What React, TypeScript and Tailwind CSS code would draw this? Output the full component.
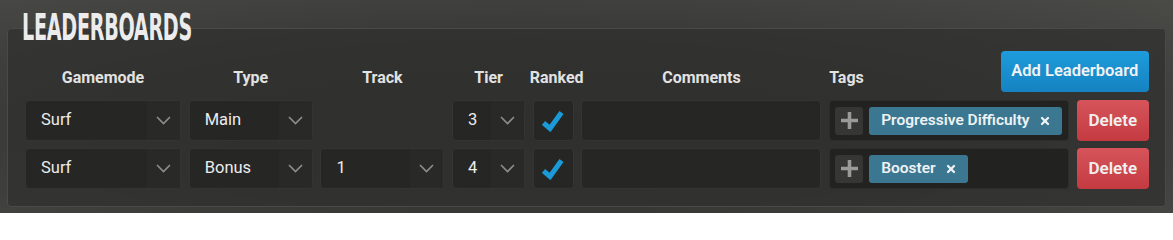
import React from 'react';
import { X } from 'lucide-react';

interface Row {
  gamemode: string;
  type: string;
  track: string | null;
  tier: string;
  ranked: boolean;
  tags: string[];
}

const ROWS: Row[] = [
  { gamemode: 'Surf', type: 'Main', track: null, tier: '3', ranked: true, tags: ['Progressive Difficulty'] },
  { gamemode: 'Surf', type: 'Bonus', track: '1', tier: '4', ranked: true, tags: ['Booster'] },
];

const GRID =
  'grid grid-cols-[156px_124px_124px_73px_41px_240px_240px_72px] gap-x-[7.7px]';

function Select({ value }: { value: string }) {
  return (
    <div className="h-[41px] flex rounded-[4px] border border-[#343432] bg-[#262624] overflow-hidden">
      <div className="flex-1 flex items-center pl-[15px] text-[16.5px] text-[#ececec]">{value}</div>
      <div className="w-[33px] flex items-center justify-center bg-[#292927]">
        <svg width="15" height="9" viewBox="0 0 15 9">
          <path d="M1 1 L7.5 7.5 L14 1" fill="none" stroke="#8e8e8e" strokeWidth="1.6" />
        </svg>
      </div>
    </div>
  );
}

function Check() {
  return (
    <div className="h-[41px] flex items-center justify-center rounded-[4px] border border-[#343432] bg-[#262624]">
      <svg width="22" height="22" viewBox="0 0 22 22">
        <path d="M1.5 13 L8 18.5 L19.5 2.5" fill="none" stroke="#1b9ad8" strokeWidth="5" strokeLinecap="butt" strokeLinejoin="miter" />
      </svg>
    </div>
  );
}

export default function App() {
  return (
    <div
      className="w-[1173px] h-[213px] overflow-hidden px-[7px] pt-[9px] bg-[radial-gradient(ellipse_at_45%_60%,#30302e_0%,#373735_45%,#4a4a47_100%)]"
      style={{ fontFamily: 'Roboto, "Liberation Sans", sans-serif' }}
    >
      <div className="relative z-10 h-[34px] pl-[15px] leading-[36px]">
        <span
          className="inline-block origin-left scale-x-[0.56] text-[38px] font-bold uppercase text-[#ececec] tracking-[-0.5px]"
          style={{ fontFamily: '"DejaVu Sans Condensed", "DejaVu Sans", sans-serif' }}
        >
          Leaderboards
        </span>
      </div>
      <div className="-mt-[15px] h-[179px] rounded-[4px] border border-[#4a4a48] bg-[#2f2f2d]/70 pl-[17px] pt-[22px]">
        <div className={`${GRID} h-[41px] items-end text-[16px] font-bold text-[#e2e2e2]`}>
          <div className="text-center pb-[2px]">Gamemode</div>
          <div className="text-center pb-[2px]">Type</div>
          <div className="text-center pb-[2px]">Track</div>
          <div className="text-center pb-[2px]">Tier</div>
          <div className="whitespace-nowrap -ml-[3px] pb-[2px]">Ranked</div>
          <div className="text-center pb-[2px]">Comments</div>
          <div className="col-span-2 flex items-end justify-between">
            <span className="pb-[2px]">Tags</span>
            <button className="h-[41px] w-[148px] rounded-[4px] bg-gradient-to-b from-[#1e9cdc] to-[#1582c1] text-[16.5px] font-semibold text-[#f2f2f2]">
              Add Leaderboard
            </button>
          </div>
        </div>
        <div className="mt-[8px] flex flex-col gap-[7px]">
          {ROWS.map((row, i) => (
            <div key={i} className={`${GRID} h-[41px]`}>
              <Select value={row.gamemode} />
              <Select value={row.type} />
              {row.track ? <Select value={row.track} /> : <div />}
              <Select value={row.tier} />
              <Check />
              <div className="h-[41px] rounded-[4px] border border-[#343432] bg-[#262624]" />
              <div className="h-[41px] flex items-center gap-[6px] px-[5px] rounded-[4px] border border-[#2d2d2b] bg-[#222220]">
                <div className="h-[28px] w-[28px] shrink-0 flex items-center justify-center rounded-[3px] bg-[#363634]">
                  <svg width="17" height="17" viewBox="0 0 17 17">
                    <path d="M8.5 0 V17 M0 8.5 H17" stroke="#9a9a9a" strokeWidth="3.6" />
                  </svg>
                </div>
                {row.tags.map(tag => (
                  <div
                    key={tag}
                    className="h-[28px] shrink-0 whitespace-nowrap flex items-center gap-[9px] pl-[12px] pr-[11px] rounded-[3px] bg-[#3c7792] text-[15.5px] font-semibold text-[#eef2f4]"
                  >
                    {tag}
                    <X className="h-[12px] w-[12px]" strokeWidth={4.5} />
                  </div>
                ))}
              </div>
              <button className="h-[41px] rounded-[4px] bg-gradient-to-b from-[#d6545b] to-[#c43a41] text-[17px] font-semibold text-[#f0f0f0]">
                Delete
              </button>
            </div>
          ))}
        </div>
      </div>
    </div>
  );
}
